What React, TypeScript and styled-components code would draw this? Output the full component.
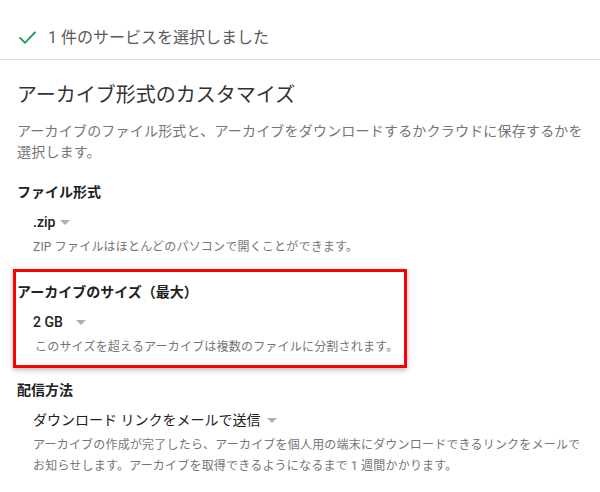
import React from "react";
import styled, { createGlobalStyle } from "styled-components";

const GlobalStyle = createGlobalStyle`
  html, body {
    margin: 0;
    padding: 0;
    background: #ffffff;
  }
  body {
    font-family: Roboto, "Noto Sans CJK JP", "Noto Sans", sans-serif;
    color: #212121;
    -webkit-font-smoothing: antialiased;
  }
`;

const Page = styled.div`
  width: 600px;
  height: 492px;
  overflow: hidden;
  background: #fff;
`;

const StatusBar = styled.div`
  display: flex;
  align-items: center;
  gap: 12px;
  height: 43px;
  padding: 16px 19px 0;
  border-bottom: 1px solid #e0e0e0;
  box-sizing: content-box;
`;

const StatusText = styled.span`
  font-size: 16px;
  line-height: 20px;
  color: #5a5a5a;
`;

const Content = styled.main`
  padding: 0 17px;
`;

const Title = styled.h1`
  margin: 21px 0 0;
  font-size: 20px;
  line-height: 28px;
  font-weight: 400;
  color: #333;
`;

const Description = styled.p`
  margin: 12px 0 0;
  font-size: 14px;
  line-height: 21px;
  color: #757575;
  letter-spacing: 0.2px;
`;

const Section = styled.section<{ $top: number; $highlight?: boolean }>`
  position: relative;
  margin-top: ${(p) => p.$top}px;

  ${(p) =>
    p.$highlight &&
    `
    &::before {
      content: "";
      position: absolute;
      top: -13px;
      left: -4px;
      width: 394px;
      bottom: -10px;
      border: 3px solid #ff0000;
      box-sizing: border-box;
      box-shadow: 0 2px 5px rgba(0, 0, 0, 0.28);
      pointer-events: none;
    }
  `}
`;

const Label = styled.h2`
  margin: 0;
  font-size: 14px;
  line-height: 20px;
  font-weight: 700;
  color: #212121;
`;

const Dropdown = styled.div<{ $gap: number; $weight?: number }>`
  display: flex;
  align-items: center;
  gap: ${(p) => p.$gap}px;
  margin: 10px 0 0 16px;
  font-size: 14px;
  line-height: 20px;
  font-weight: ${(p) => p.$weight ?? 500};
  color: #212121;
`;

const Caret = styled.span`
  width: 0;
  height: 0;
  border-left: 5px solid transparent;
  border-right: 5px solid transparent;
  border-top: 5px solid #b0b0b0;
  margin-top: 1px;
`;

const Help = styled.p<{ $indent: number }>`
  margin: 5px 0 0 ${(p) => p.$indent}px;
  font-size: 12px;
  line-height: 21px;
  color: #757575;
  letter-spacing: 0.2px;
`;

const CheckIcon = () => (
  <svg width="17" height="14" viewBox="0 0 17 14" fill="none">
    <path
      d="M1.2 7 L6 11.8 L15.8 1.6"
      stroke="#0f9d58"
      strokeWidth="1.8"
      strokeLinecap="square"
    />
  </svg>
);

export default function App() {
  return (
    <Page>
      <GlobalStyle />
      <StatusBar>
        <CheckIcon />
        <StatusText>1 件のサービスを選択しました</StatusText>
      </StatusBar>
      <Content>
        <Title>アーカイブ形式のカスタマイズ</Title>
        <Description>
          アーカイブのファイル形式と、アーカイブをダウンロードするかクラウドに保存するかを選択します。
        </Description>

        <Section $top={19}>
          <Label>ファイル形式</Label>
          <Dropdown $gap={5}>
            <span>.zip</span>
            <Caret />
          </Dropdown>
          <Help $indent={16}>ZIP ファイルはほとんどのパソコンで開くことができます。</Help>
        </Section>

        <Section $top={24} $highlight>
          <Label>アーカイブのサイズ（最大）</Label>
          <Dropdown $gap={13}>
            <span>2 GB</span>
            <Caret />
          </Dropdown>
          <Help $indent={18}>
            このサイズを超えるアーカイブは複数のファイルに分割されます。
          </Help>
        </Section>

        <Section $top={22}>
          <Label>配信方法</Label>
          <Dropdown $gap={7} $weight={400}>
            <span>ダウンロード リンクをメールで送信</span>
            <Caret />
          </Dropdown>
          <Help $indent={16}>
            アーカイブの作成が完了したら、アーカイブを個人用の端末にダウンロードできるリンクをメールでお知らせします。アーカイブを取得できるようになるまで 1 週間かかります。
          </Help>
        </Section>
      </Content>
    </Page>
  );
}
